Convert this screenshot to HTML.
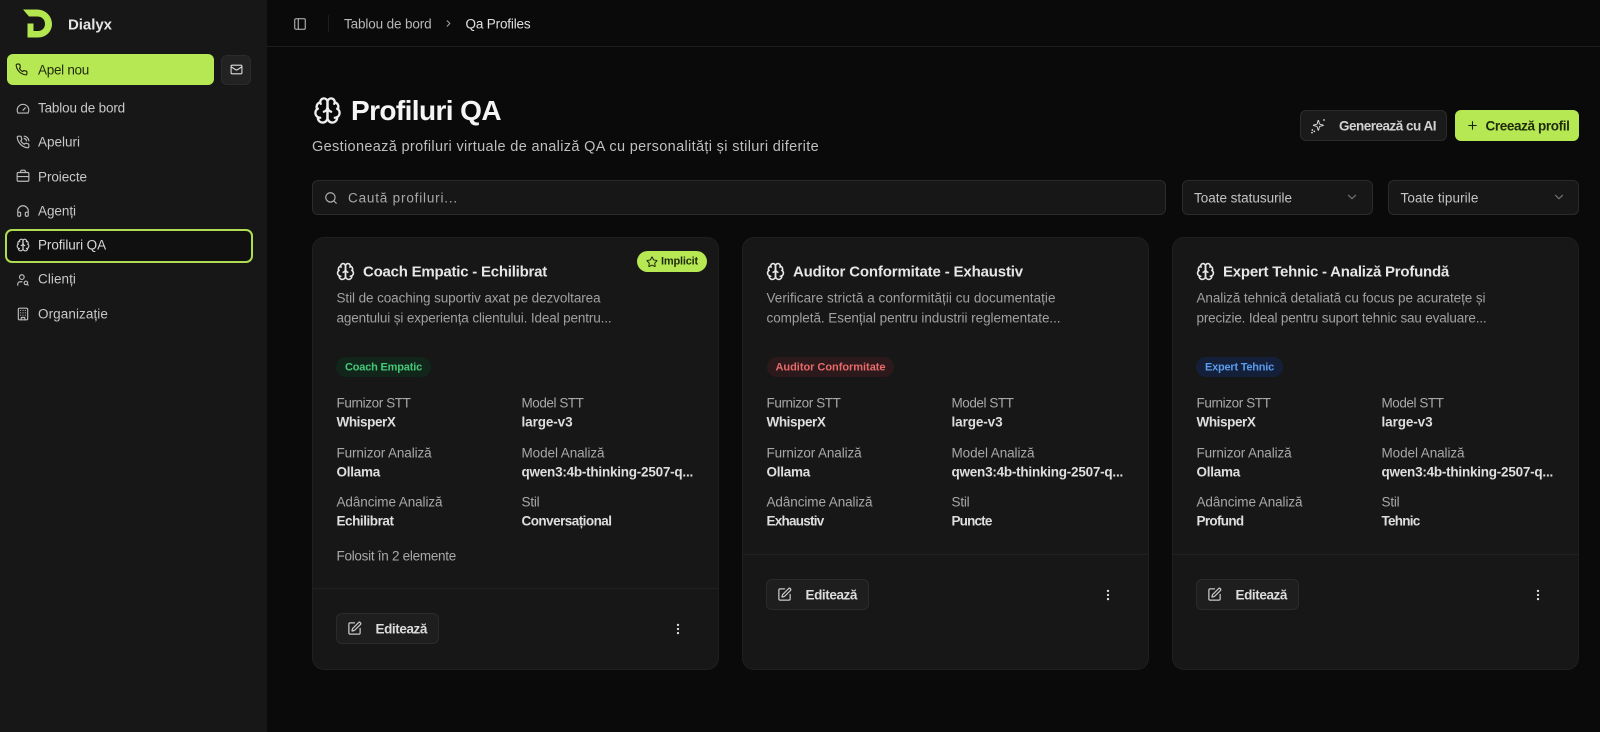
<!DOCTYPE html>
<html lang="ro"><head><meta charset="utf-8"><title>Dialyx</title>
<style>
*{box-sizing:border-box;margin:0;padding:0}
html,body{width:1600px;height:732px;overflow:hidden;background:#0a0a0a}
body{font-family:"Liberation Sans","DejaVu Sans",sans-serif;color:#e8e8e8;position:relative}
.b{position:absolute}
.t{position:absolute;white-space:nowrap;transform:translateY(-50%);line-height:1;font-size:13.5px;color:#bdbdbd}
.n{font-size:13.5px;color:#c8c8c8}
.k{color:#a8a8a8;font-size:13.5px}
.v{color:#dedede;font-size:13.5px;font-weight:700}
.d{color:#a0a0a0;font-size:13.5px}
.h{color:#e6e6e6;font-size:15px;font-weight:700}
svg.i{position:absolute;fill:none;stroke:currentColor;stroke-width:2;stroke-linecap:round;stroke-linejoin:round}
.card{position:absolute;top:237px;width:407px;height:433px;background:#171717;border:1px solid #1f1f1f;border-radius:12px}
.btn{position:absolute;background:#1e1e1e;border:1px solid #2b2b2b;border-radius:6px}
.line{position:absolute;height:1px;background:#212121}
</style></head><body>
<svg width="0" height="0" style="position:absolute"><defs>
<symbol id="brain" viewBox="0 0 24 24"><path d="M12 5a3 3 0 1 0-5.997.125 4 4 0 0 0-2.526 5.77 4 4 0 0 0 .556 6.588A4 4 0 1 0 12 18Z"/><path d="M12 5a3 3 0 1 1 5.997.125 4 4 0 0 1 2.526 5.77 4 4 0 0 1-.556 6.588A4 4 0 1 1 12 18Z"/><path d="M15 13a4.5 4.5 0 0 1-3-4 4.5 4.5 0 0 1-3 4"/><path d="M17.599 6.5a3 3 0 0 0 .399-1.375"/><path d="M6.003 5.125A3 3 0 0 0 6.401 6.5"/><path d="M3.477 10.896a4 4 0 0 1 .585-.396"/><path d="M19.938 10.5a4 4 0 0 1 .585.396"/><path d="M6 18a4 4 0 0 1-1.967-.516"/><path d="M19.967 17.484A4 4 0 0 1 18 18"/></symbol>
<symbol id="pen" viewBox="0 0 24 24"><path d="M12 3H5a2 2 0 0 0-2 2v14a2 2 0 0 0 2 2h14a2 2 0 0 0 2-2v-7"/><path d="M18.375 2.625a1 1 0 0 1 3 3l-9.013 9.014a2 2 0 0 1-.853.505l-2.873.84a.5.5 0 0 1-.62-.62l.84-2.873a2 2 0 0 1 .506-.852z"/></symbol>
<symbol id="dots" viewBox="0 0 24 24"><circle cx="12" cy="12" r="1"/><circle cx="12" cy="5" r="1"/><circle cx="12" cy="19" r="1"/></symbol>
<symbol id="chev" viewBox="0 0 24 24"><path d="m6 9 6 6 6-6"/></symbol>
</defs></svg>

<!-- sidebar -->
<div class="b" style="left:0;top:0;width:267px;height:732px;background:#171717"></div>
<svg class="b" style="left:0;top:0" width="60" height="46"><path fill="#b3e64f" d="M23 9.5H37C46 9.5 52 16.5 52 24C52 31.5 46 37.5 38 37.5H27.5V23.5H33.5V31H38C42 31 45 28 45 24C45 19.5 42 16.5 37 16.5H29Z"/></svg>
<span class="t" style="left:68px;top:25px;--w:44;font-size:15px;font-weight:700;color:#e4e4e4">Dialyx</span>
<div class="b" style="left:6.5px;top:54px;width:207px;height:31px;background:#b5e853;border-radius:6px"></div>
<svg class="i" style="left:15px;top:63px;color:#1a2208" width="13" height="13" viewBox="0 0 24 24"><path d="M22 16.92v3a2 2 0 0 1-2.18 2 19.79 19.79 0 0 1-8.63-3.07 19.5 19.5 0 0 1-6-6 19.79 19.79 0 0 1-3.07-8.67A2 2 0 0 1 4.11 2h3a2 2 0 0 1 2 1.72c.127.96.361 1.903.7 2.81a2 2 0 0 1-.45 2.11L8.09 9.91a16 16 0 0 0 6 6l1.27-1.27a2 2 0 0 1 2.11-.45c.907.339 1.85.573 2.81.7A2 2 0 0 1 22 16.92z"/></svg>
<span class="t n" style="left:38px;top:70px;--w:51;color:#1f2a0a">Apel nou</span>
<div class="btn" style="left:221px;top:55px;width:30px;height:30px;background:#222"></div>
<svg class="i" style="left:230px;top:63px;color:#ddd" width="13" height="13" viewBox="0 0 24 24"><rect x="2" y="4" width="20" height="16" rx="2"/><path d="m22 7-8.97 5.7a1.94 1.94 0 0 1-2.06 0L2 7"/></svg>

<div class="b" style="left:5px;top:229px;width:248px;height:33.5px;background:#101010;border:2px solid #aedd52;border-radius:7px"></div>

<svg class="i" style="left:15.5px;top:101.5px;color:#bbb" width="14" height="14" viewBox="0 0 24 24"><path d="m12 14 4-4"/><path d="M3.34 19a10 10 0 1 1 17.32 0Z"/></svg>
<span class="t n" style="left:38px;top:107.5px;--w:87">Tablou de bord</span>
<svg class="i" style="left:15.5px;top:135px;color:#bbb" width="14" height="14" viewBox="0 0 24 24"><path d="M22 16.92v3a2 2 0 0 1-2.18 2 19.79 19.79 0 0 1-8.63-3.07 19.5 19.5 0 0 1-6-6 19.79 19.79 0 0 1-3.07-8.67A2 2 0 0 1 4.11 2h3a2 2 0 0 1 2 1.72c.127.96.361 1.903.7 2.81a2 2 0 0 1-.45 2.11L8.09 9.91a16 16 0 0 0 6 6l1.27-1.27a2 2 0 0 1 2.11-.45c.907.339 1.85.573 2.81.7A2 2 0 0 1 22 16.92z"/><path d="M14.05 2a9 9 0 0 1 8 7.94"/><path d="M14.05 6A5 5 0 0 1 18 10"/></svg>
<span class="t n" style="left:38px;top:142px;--w:42">Apeluri</span>
<svg class="i" style="left:15.5px;top:169px;color:#bbb" width="14" height="14" viewBox="0 0 24 24"><path d="M8 6V4a2 2 0 0 1 2-2h4a2 2 0 0 1 2 2v2"/><rect width="20" height="15" x="2" y="6" rx="2"/><path d="M2 13h20"/></svg>
<span class="t n" style="left:38px;top:176.5px;--w:49">Proiecte</span>
<svg class="i" style="left:15.5px;top:204px;color:#bbb" width="14" height="14" viewBox="0 0 24 24"><path d="M3 14h3a2 2 0 0 1 2 2v3a2 2 0 0 1-2 2H5a2 2 0 0 1-2-2v-7a9 9 0 0 1 18 0v7a2 2 0 0 1-2 2h-1a2 2 0 0 1-2-2v-3a2 2 0 0 1 2-2h3"/></svg>
<span class="t n" style="left:38px;top:210.5px;--w:38">Agenți</span>
<svg class="i" style="left:15.5px;top:238px;color:#ccc" width="14" height="14" viewBox="0 0 24 24"><use href="#brain"/></svg>
<span class="t n" style="left:38px;top:245px;--w:68;color:#d8d8d8">Profiluri QA</span>
<svg class="i" style="left:15.5px;top:272.5px;color:#bbb" width="14" height="14" viewBox="0 0 24 24"><circle cx="10" cy="7" r="4"/><path d="M10.3 15H7a4 4 0 0 0-4 4v2"/><circle cx="17" cy="17" r="3"/><path d="m21 21-1.9-1.9"/></svg>
<span class="t n" style="left:38px;top:279px;--w:38">Clienți</span>
<svg class="i" style="left:15.5px;top:307px;color:#bbb" width="14" height="14" viewBox="0 0 24 24"><rect width="16" height="20" x="4" y="2" rx="2"/><path d="M9 22v-4h6v4"/><path d="M8 6h.01M16 6h.01M12 6h.01M12 10h.01M12 14h.01M16 10h.01M16 14h.01M8 10h.01M8 14h.01"/></svg>
<span class="t n" style="left:38px;top:314px;--w:70">Organizație</span>

<!-- header -->
<div class="line" style="left:267px;top:46px;width:1333px;background:#1d1d1d"></div>
<svg class="i" style="left:292.5px;top:17px;color:#c0c0c0;stroke-width:1.8" width="14" height="14" viewBox="0 0 24 24"><rect width="18" height="18" x="3" y="3" rx="2"/><path d="M9 3v18"/></svg>
<div class="b" style="left:327.5px;top:15px;width:1px;height:17px;background:#1d1d1d"></div>
<span class="t n" style="left:344px;top:23.5px;--w:87.5;color:#b8b8b8">Tablou de bord</span>
<svg class="i" style="left:442.5px;top:18px;color:#aaa" width="11" height="11" viewBox="0 0 24 24"><path d="m9 18 6-6-6-6"/></svg>
<span class="t n" style="left:465.5px;top:23.5px;--w:65;color:#e0e0e0">Qa Profiles</span>

<!-- title -->
<svg class="i" style="left:312.5px;top:96px;color:#f0f0f0;stroke-width:1.9" width="29" height="29" viewBox="0 0 24 24"><use href="#brain"/></svg>
<span class="t" style="left:351px;top:110.5px;--w:150;font-size:28px;font-weight:700;color:#f5f5f5">Profiluri QA</span>
<span class="t" style="left:312px;top:147px;--w:507;font-size:14.5px;color:#bfbfbf">Gestionează profiluri virtuale de analiză QA cu personalități și stiluri diferite</span>

<div class="btn" style="left:1300px;top:109.5px;width:147px;height:31px;background:#1a1a1a"></div>
<svg class="i" style="left:1310px;top:117.5px;color:#ddd;stroke-width:1.8" width="16" height="16" viewBox="0 0 24 24"><path d="M9.937 15.5A2 2 0 0 0 8.5 14.063l-6.135-1.582a.5.5 0 0 1 0-.962L8.5 9.936A2 2 0 0 0 9.937 8.5l1.582-6.135a.5.5 0 0 1 .963 0L14.063 8.5A2 2 0 0 0 15.5 9.937l6.135 1.581a.5.5 0 0 1 0 .964L15.5 14.063a2 2 0 0 0-1.437 1.437l-1.582 6.135a.5.5 0 0 1-.963 0z" transform="translate(3.5 2) scale(.75)"/><path d="M21 3h.01M3 22h.01M6.5 20h.01M3.5 18h.01" stroke-width="2.6"/></svg>
<span class="t" style="left:1339px;top:125.5px;--w:97;color:#d2d2d2;font-weight:700">Generează cu AI</span>
<div class="b" style="left:1455px;top:110px;width:124px;height:30.5px;background:#b5e853;border-radius:6px"></div>
<svg class="i" style="left:1465.5px;top:119px;color:#1a2208" width="13" height="13" viewBox="0 0 24 24"><path d="M5 12h14M12 5v14"/></svg>
<span class="t" style="left:1485.5px;top:125.5px;--w:84;color:#1f2a0a;font-weight:700">Creează profil</span>

<!-- filters -->
<div class="btn" style="left:312px;top:180px;width:854px;height:35px;background:#171717"></div>
<svg class="i" style="left:323.5px;top:190.5px;color:#b5b5b5" width="14" height="14" viewBox="0 0 24 24"><circle cx="11" cy="11" r="8"/><path d="m21 21-4.3-4.3"/></svg>
<span class="t" style="left:348px;top:198px;--w:110;color:#a9a9a9">Caută profiluri...</span>
<div class="btn" style="left:1182px;top:180px;width:191px;height:35px;background:#171717"></div>
<span class="t" style="left:1194px;top:198px;--w:98;color:#c4c4c4">Toate statusurile</span>
<svg class="i" style="left:1345px;top:190px;color:#777" width="14" height="14" viewBox="0 0 24 24"><use href="#chev"/></svg>
<div class="btn" style="left:1388px;top:180px;width:191px;height:35px;background:#171717"></div>
<span class="t" style="left:1400.5px;top:198px;--w:78;color:#c4c4c4">Toate tipurile</span>
<svg class="i" style="left:1552px;top:190px;color:#777" width="14" height="14" viewBox="0 0 24 24"><use href="#chev"/></svg>

<!-- card 1 -->
<div class="card" style="left:312px"></div>
<svg class="i" style="left:336px;top:262px;color:#e8e8e8" width="19" height="19" viewBox="0 0 24 24"><use href="#brain"/></svg>
<span class="t h" style="left:363px;top:271.5px;--w:184">Coach Empatic - Echilibrat</span>
<div class="b" style="left:637px;top:251px;width:70px;height:21px;background:#b5e853;border-radius:11px"></div>
<svg class="i" style="left:646px;top:256px;color:#1f2a0a" width="12" height="12" viewBox="0 0 24 24"><path d="M11.525 2.295a.53.53 0 0 1 .95 0l2.31 4.679a2.123 2.123 0 0 0 1.595 1.16l5.166.756a.53.53 0 0 1 .294.904l-3.736 3.638a2.123 2.123 0 0 0-.611 1.878l.882 5.14a.53.53 0 0 1-.771.56l-4.618-2.428a2.122 2.122 0 0 0-1.973 0L6.396 21.01a.53.53 0 0 1-.77-.56l.881-5.139a2.122 2.122 0 0 0-.611-1.879L2.16 9.795a.53.53 0 0 1 .294-.906l5.165-.755a2.122 2.122 0 0 0 1.597-1.16z"/></svg>
<span class="t" style="left:661px;top:261.5px;--w:37;font-size:11px;color:#1f2a0a;font-weight:700">Implicit</span>
<span class="t d" style="left:336.5px;top:298px;--w:264">Stil de coaching suportiv axat pe dezvoltarea</span>
<span class="t d" style="left:336.5px;top:317.5px;--w:275">agentului și experiența clientului. Ideal pentru...</span>
<div class="b" style="left:336px;top:357px;width:95px;height:20px;background:#11251a;border-radius:10px"></div>
<span class="t" style="left:345px;top:367.5px;--w:77;font-size:11px;color:#45c878;font-weight:700">Coach Empatic</span>
<span class="t k" style="left:336.5px;top:403px;--w:74">Furnizor STT</span>
<span class="t v" style="left:336.5px;top:422px;--w:59">WhisperX</span>
<span class="t k" style="left:521.5px;top:403px;--w:62">Model STT</span>
<span class="t v" style="left:521.5px;top:422px;--w:51">large-v3</span>
<span class="t k" style="left:336.5px;top:452.5px;--w:95">Furnizor Analiză</span>
<span class="t v" style="left:336.5px;top:471.5px;--w:43.5">Ollama</span>
<span class="t k" style="left:521.5px;top:452.5px;--w:83">Model Analiză</span>
<span class="t v" style="left:521.5px;top:471.5px;--w:171.5">qwen3:4b-thinking-2507-q...</span>
<span class="t k" style="left:336.5px;top:502px;--w:106">Adâncime Analiză</span>
<span class="t v" style="left:336.5px;top:521px;--w:57">Echilibrat</span>
<span class="t k" style="left:521.5px;top:502px;--w:18">Stil</span>
<span class="t v" style="left:521.5px;top:521px;--w:90">Conversațional</span>
<span class="t k" style="left:336.5px;top:555.5px;--w:119.5">Folosit în 2 elemente</span>
<div class="line" style="left:312px;top:588px;width:407px"></div>
<div class="btn" style="left:336px;top:613px;width:103px;height:31px"></div>
<svg class="i" style="left:347px;top:621px;color:#c8c8c8" width="15" height="15" viewBox="0 0 24 24"><use href="#pen"/></svg>
<span class="t" style="left:375.5px;top:629px;--w:51.5;color:#dcdcdc;font-weight:700">Editează</span>
<svg class="i" style="left:671px;top:622px;color:#ddd" width="14" height="14" viewBox="0 0 24 24"><use href="#dots"/></svg>

<!-- card 2 -->
<div class="card" style="left:742px"></div>
<svg class="i" style="left:766px;top:262px;color:#e8e8e8" width="19" height="19" viewBox="0 0 24 24"><use href="#brain"/></svg>
<span class="t h" style="left:793px;top:271.5px;--w:230">Auditor Conformitate - Exhaustiv</span>
<span class="t d" style="left:766.5px;top:298px;--w:289">Verificare strictă a conformității cu documentație</span>
<span class="t d" style="left:766.5px;top:317.5px;--w:294">completă. Esențial pentru industrii reglementate...</span>
<div class="b" style="left:767px;top:357px;width:127px;height:20px;background:#2b191b;border-radius:10px"></div>
<span class="t" style="left:775.5px;top:367.5px;--w:110;font-size:11px;color:#e86a6a;font-weight:700">Auditor Conformitate</span>
<span class="t k" style="left:766.5px;top:403px;--w:74">Furnizor STT</span>
<span class="t v" style="left:766.5px;top:422px;--w:59">WhisperX</span>
<span class="t k" style="left:951.5px;top:403px;--w:62">Model STT</span>
<span class="t v" style="left:951.5px;top:422px;--w:51">large-v3</span>
<span class="t k" style="left:766.5px;top:452.5px;--w:95">Furnizor Analiză</span>
<span class="t v" style="left:766.5px;top:471.5px;--w:43.5">Ollama</span>
<span class="t k" style="left:951.5px;top:452.5px;--w:83">Model Analiză</span>
<span class="t v" style="left:951.5px;top:471.5px;--w:171.5">qwen3:4b-thinking-2507-q...</span>
<span class="t k" style="left:766.5px;top:502px;--w:106">Adâncime Analiză</span>
<span class="t v" style="left:766.5px;top:521px;--w:57">Exhaustiv</span>
<span class="t k" style="left:951.5px;top:502px;--w:18">Stil</span>
<span class="t v" style="left:951.5px;top:521px;--w:40">Puncte</span>
<div class="line" style="left:742px;top:554px;width:407px"></div>
<div class="btn" style="left:766px;top:579px;width:103px;height:31px"></div>
<svg class="i" style="left:777px;top:587px;color:#c8c8c8" width="15" height="15" viewBox="0 0 24 24"><use href="#pen"/></svg>
<span class="t" style="left:805.5px;top:595px;--w:51.5;color:#dcdcdc;font-weight:700">Editează</span>
<svg class="i" style="left:1101px;top:588px;color:#ddd" width="14" height="14" viewBox="0 0 24 24"><use href="#dots"/></svg>

<!-- card 3 -->
<div class="card" style="left:1172px"></div>
<svg class="i" style="left:1196px;top:262px;color:#e8e8e8" width="19" height="19" viewBox="0 0 24 24"><use href="#brain"/></svg>
<span class="t h" style="left:1223px;top:271.5px;--w:226">Expert Tehnic - Analiză Profundă</span>
<span class="t d" style="left:1196.5px;top:298px;--w:289">Analiză tehnică detaliată cu focus pe acuratețe și</span>
<span class="t d" style="left:1196.5px;top:317.5px;--w:290">precizie. Ideal pentru suport tehnic sau evaluare...</span>
<div class="b" style="left:1196px;top:357px;width:87px;height:20px;background:#14203a;border-radius:10px"></div>
<span class="t" style="left:1205px;top:367.5px;--w:69;font-size:11px;color:#5a9bec;font-weight:700">Expert Tehnic</span>
<span class="t k" style="left:1196.5px;top:403px;--w:74">Furnizor STT</span>
<span class="t v" style="left:1196.5px;top:422px;--w:59">WhisperX</span>
<span class="t k" style="left:1381.5px;top:403px;--w:62">Model STT</span>
<span class="t v" style="left:1381.5px;top:422px;--w:51">large-v3</span>
<span class="t k" style="left:1196.5px;top:452.5px;--w:95">Furnizor Analiză</span>
<span class="t v" style="left:1196.5px;top:471.5px;--w:43.5">Ollama</span>
<span class="t k" style="left:1381.5px;top:452.5px;--w:83">Model Analiză</span>
<span class="t v" style="left:1381.5px;top:471.5px;--w:171.5">qwen3:4b-thinking-2507-q...</span>
<span class="t k" style="left:1196.5px;top:502px;--w:106">Adâncime Analiză</span>
<span class="t v" style="left:1196.5px;top:521px;--w:47">Profund</span>
<span class="t k" style="left:1381.5px;top:502px;--w:18">Stil</span>
<span class="t v" style="left:1381.5px;top:521px;--w:38">Tehnic</span>
<div class="line" style="left:1172px;top:554px;width:407px"></div>
<div class="btn" style="left:1196px;top:579px;width:103px;height:31px"></div>
<svg class="i" style="left:1207px;top:587px;color:#c8c8c8" width="15" height="15" viewBox="0 0 24 24"><use href="#pen"/></svg>
<span class="t" style="left:1235.5px;top:595px;--w:51.5;color:#dcdcdc;font-weight:700">Editează</span>
<svg class="i" style="left:1531px;top:588px;color:#ddd" width="14" height="14" viewBox="0 0 24 24"><use href="#dots"/></svg>

<script>
document.querySelectorAll('.t').forEach(function(e){
  var w=parseFloat(getComputedStyle(e).getPropertyValue('--w'));
  if(!w)return;
  var m=e.getBoundingClientRect().width,n=e.textContent.length;
  e.style.letterSpacing=((w-m)/n).toFixed(3)+'px';
});
</script>
</body></html>
